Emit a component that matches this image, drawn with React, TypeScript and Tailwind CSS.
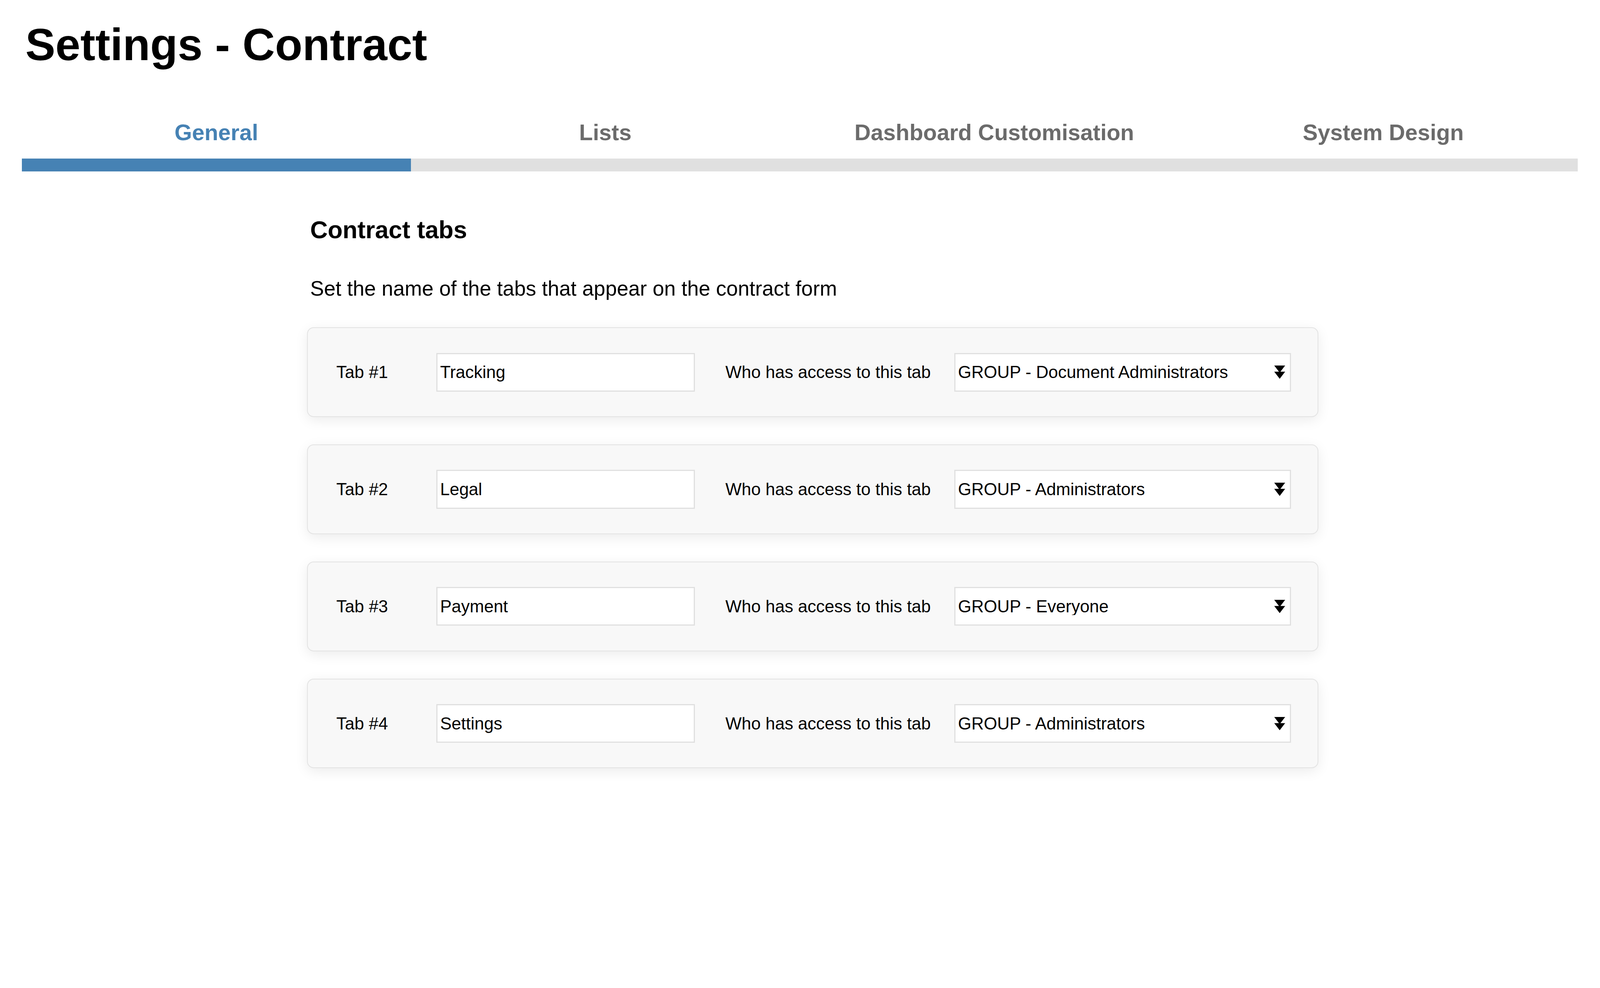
import { useState } from "react";

interface ContractTab {
  id: number;
  name: string;
  access: string;
}

const navTabs = ["General", "Lists", "Dashboard Customisation", "System Design"];

const groups = [
  "GROUP - Document Administrators",
  "GROUP - Administrators",
  "GROUP - Everyone",
];

const initialTabs: ContractTab[] = [
  { id: 1, name: "Tracking", access: "GROUP - Document Administrators" },
  { id: 2, name: "Legal", access: "GROUP - Administrators" },
  { id: 3, name: "Payment", access: "GROUP - Everyone" },
  { id: 4, name: "Settings", access: "GROUP - Administrators" },
];

function DoubleArrow() {
  return (
    <svg
      viewBox="0 0 34 41"
      className="pointer-events-none absolute right-[15px] top-1/2 h-[34px] w-[28px] -translate-y-1/2"
      fill="#000"
    >
      <path d="M0 0 H34 L17 22 Z" />
      <path d="M0 19 H34 L17 41 Z" />
    </svg>
  );
}

function TabRow({ tab, onChange }: { tab: ContractTab; onChange: (t: ContractTab) => void }) {
  return (
    <div className="flex items-center rounded-[17px] border-[2.5px] border-[#e3e3e3] bg-[#f8f8f8] py-[63.3px] pl-[73px] pr-[62px] shadow-[0_8px_33px_rgba(0,0,0,0.08)]">
      <div className="w-[256px] shrink-0 text-[44px] leading-none">Tab #{tab.id}</div>
      <input
        value={tab.name}
        onChange={(e) => onChange({ ...tab, name: e.target.value })}
        className="h-[99.2px] w-[662px] shrink-0 border-[3.3px] border-[#e0e0e0] bg-white px-[6.7px] text-[44px] leading-none text-black outline-none"
      />
      <div className="ml-[78px] shrink-0 whitespace-nowrap text-[44px] leading-none">
        Who has access to this tab
      </div>
      <div className="relative ml-[60px] w-[862px] shrink-0">
        <select
          value={tab.access}
          onChange={(e) => onChange({ ...tab, access: e.target.value })}
          className="h-[99.2px] w-full appearance-none rounded-none border-[3.3px] border-[#e0e0e0] bg-white px-[6.7px] text-[44px] leading-none text-black outline-none"
        >
          {groups.map((g) => (
            <option key={g} value={g}>
              {g}
            </option>
          ))}
        </select>
        <DoubleArrow />
      </div>
    </div>
  );
}

export default function App() {
  const [active, setActive] = useState(0);
  const [tabs, setTabs] = useState(initialTabs);

  const updateTab = (t: ContractTab) => {
    setTabs((prev) => prev.map((p) => (p.id === t.id ? t : p)));
  };

  return (
    <div className="bg-white pb-[40px] pl-[56px] pr-[57px] pt-[56.5px] font-['Liberation_Sans',Arial,sans-serif] text-black">
      <h1 className="pl-[9px] text-[115px] font-bold leading-none">Settings - Contract</h1>

      {/* Section tabs */}
      <div className="mt-[139px] grid grid-cols-4">
        {navTabs.map((label, i) => (
          <button key={label} type="button" onClick={() => setActive(i)} className="flex flex-col">
            <span
              className={`pb-[37.5px] text-center text-[57.5px] font-bold leading-none ${
                active === i ? "text-[#4682b4]" : "text-[#6b6b6b]"
              }`}
            >
              {label}
            </span>
            <span className={`h-[33.3px] w-full ${active === i ? "bg-[#4682b4]" : "bg-[#e0e0e0]"}`} />
          </button>
        ))}
      </div>

      <div className="ml-[730px] mt-[119.6px] w-[2589px]">
        <h2 className="pl-[8px] text-[62.3px] font-bold leading-none">Contract tabs</h2>
        <p className="mt-[91px] pl-[8px] text-[53.1px] leading-none">
          Set the name of the tabs that appear on the contract form
        </p>

        <div className="mt-[73.5px] flex flex-col gap-[70px]">
          {tabs.map((tab) => (
            <TabRow key={tab.id} tab={tab} onChange={updateTab} />
          ))}
        </div>
      </div>
    </div>
  );
}
